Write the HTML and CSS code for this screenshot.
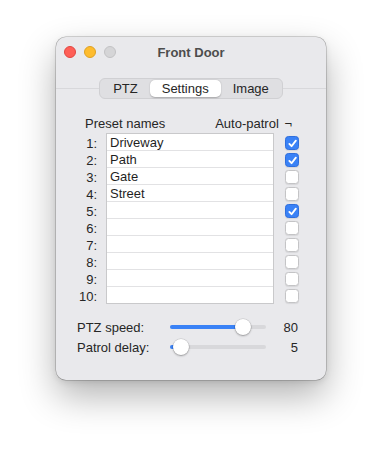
FILE: index.html
```html
<!DOCTYPE html>
<html lang="en">
<head>
    <meta charset="UTF-8">
    <meta name="viewport" content="width=device-width, initial-scale=1.0">
    <title>Front Door</title>
    <link rel="stylesheet" href="styles.css">
</head>
<body>
    <div class="window">
        <header class="titlebar">
            <div class="lights">
                <span class="light red"></span>
                <span class="light yellow"></span>
                <span class="light gray"></span>
            </div>
            <h1 class="title">Front Door</h1>
        </header>

        <nav class="tabs">
            <span class="tab">PTZ</span>
            <span class="tab selected">Settings</span>
            <span class="tab">Image</span>
        </nav>

        <main class="pane">
            <div class="presets-head">
                <span>Preset names</span>
                <span>Auto-patrol <span class="not">¬</span></span>
            </div>

            <div class="presets">
                <ol class="numbers">
                    <li>1:</li><li>2:</li><li>3:</li><li>4:</li><li>5:</li>
                    <li>6:</li><li>7:</li><li>8:</li><li>9:</li><li>10:</li>
                </ol>
                <ul class="names">
                    <li>Driveway</li>
                    <li>Path</li>
                    <li>Gate</li>
                    <li>Street</li>
                    <li></li><li></li><li></li><li></li><li></li><li></li>
                </ul>
                <ul class="checks">
                    <li><span class="check on"><svg viewBox="0 0 14 14"><path d="M3.6 7.4 L6 9.9 L10.6 3.9"/></svg></span></li>
                    <li><span class="check on"><svg viewBox="0 0 14 14"><path d="M3.6 7.4 L6 9.9 L10.6 3.9"/></svg></span></li>
                    <li><span class="check"></span></li>
                    <li><span class="check"></span></li>
                    <li><span class="check on"><svg viewBox="0 0 14 14"><path d="M3.6 7.4 L6 9.9 L10.6 3.9"/></svg></span></li>
                    <li><span class="check"></span></li>
                    <li><span class="check"></span></li>
                    <li><span class="check"></span></li>
                    <li><span class="check"></span></li>
                    <li><span class="check"></span></li>
                </ul>
            </div>

            <div class="sliders">
                <div class="slider-row">
                    <span class="slider-label">PTZ speed:</span>
                    <div class="slider">
                        <div class="fill" style="width: 73px"></div>
                        <span class="thumb" style="left: 73px"></span>
                    </div>
                    <span class="slider-value">80</span>
                </div>
                <div class="slider-row">
                    <span class="slider-label">Patrol delay:</span>
                    <div class="slider">
                        <div class="fill" style="width: 11px"></div>
                        <span class="thumb" style="left: 11px"></span>
                    </div>
                    <span class="slider-value">5</span>
                </div>
            </div>
        </main>
    </div>
</body>
</html>
```

FILE: styles.css
```css
body {
    margin: 0;
    min-height: 455px;
    background: #ffffff;
    font-family: "Liberation Sans", Arial, sans-serif;
    font-size: 13px;
    color: #262626;
}

ul, ol {
    list-style: none;
    margin: 0;
    padding: 0;
}

.window {
    margin: 37px 0 0 56px;
    width: 270px;
    height: 343px;
    box-sizing: border-box;
    background: #e9e9ec;
    border-radius: 10px;
    overflow: hidden;
    box-shadow: 0 0 0 0.5px rgba(0, 0, 0, 0.3), 0 16px 36px rgba(0, 0, 0, 0.3), 0 2px 6px rgba(0, 0, 0, 0.1);
    display: flex;
    flex-direction: column;
}

/* Barra de título */
.titlebar {
    height: 30px;
    display: flex;
    align-items: center;
}

.lights {
    display: flex;
    gap: 8px;
    padding-left: 8px;
}

.light {
    width: 12px;
    height: 12px;
    border-radius: 50%;
    box-sizing: border-box;
}

.red { background: #fe5f57; border: 0.5px solid #e14640; }
.yellow { background: #febc2e; border: 0.5px solid #dea123; }
.gray { background: #d5d5d7; border: 0.5px solid #c2c2c4; }

.title {
    margin: 0 0 0 -60px;
    flex: 1;
    text-align: center;
    font-size: 13px;
    font-weight: bold;
    color: #4d4d4d;
}

/* Abas */
.tabs {
    align-self: center;
    margin-top: 11px;
    display: flex;
    height: 21px;
    box-sizing: border-box;
    padding: 1px;
    background: #dfdfe2;
    border: 0.5px solid #d0d0d3;
    border-radius: 6px;
    position: relative;
    z-index: 1;
}

.tab {
    display: flex;
    align-items: center;
    justify-content: center;
    padding: 0 12px;
    border-radius: 5px;
    color: #262626;
}

.tab.selected {
    background: #ffffff;
    box-shadow: 0 0.5px 1.5px rgba(0, 0, 0, 0.25);
}

.pane {
    flex: 1;
    margin-top: -11px;
    padding-top: 27px;
    border-top: 1px solid #d8d8db;
}

.presets-head {
    display: flex;
    justify-content: space-between;
    line-height: 16px;
    margin-left: 29px;
    width: 207px;
    margin-bottom: 1px;
}

.not {
    margin-left: 2px;
}

.presets {
    display: flex;
    margin-left: 22px;
}

.numbers {
    width: 19px;
    text-align: right;
    padding-top: 1px;
    margin-right: 9px;
}

.numbers li {
    height: 17px;
    line-height: 19px;
}

.names {
    width: 168px;
    box-sizing: border-box;
    background: #ffffff;
    border: 1px solid #c9c9cb;
    border-bottom: none;
}

.names li {
    height: 17px;
    box-sizing: border-box;
    border-bottom: 1px solid #e2e2e4;
    padding-left: 3px;
    line-height: 18px;
    color: #1f1f1f;
}

.names li:last-child {
    border-bottom: 1px solid #c9c9cb;
}

.checks {
    margin-left: 11px;
    padding-top: 1px;
}

.checks li {
    height: 17px;
    display: flex;
    align-items: center;
}

.check {
    width: 14px;
    height: 14px;
    box-sizing: border-box;
    border-radius: 3.5px;
    background: #ffffff;
    border: 0.5px solid #c4c4c6;
    box-shadow: 0 0.5px 1px rgba(0, 0, 0, 0.08);
    display: block;
}

.check.on {
    background: #3a82f6;
    border-color: #2f6fde;
}

.check svg {
    display: block;
    width: 13px;
    height: 13px;
}

.check svg path {
    fill: none;
    stroke: #ffffff;
    stroke-width: 2;
    stroke-linecap: round;
    stroke-linejoin: round;
}

/* Controles deslizantes */
.sliders {
    margin-top: 13px;
    margin-left: 21px;
}

.slider-row {
    display: flex;
    align-items: center;
    height: 20px;
}

.slider-label {
    width: 93px;
}

.slider {
    position: relative;
    width: 96px;
    height: 4px;
    border-radius: 2px;
    background: #d8d8db;
}

.fill {
    height: 4px;
    border-radius: 2px;
    background: #3a82f6;
}

.thumb {
    position: absolute;
    top: 50%;
    width: 16px;
    height: 16px;
    border-radius: 50%;
    background: #ffffff;
    box-shadow: 0 0 0 0.5px rgba(0, 0, 0, 0.15), 0 1px 2px rgba(0, 0, 0, 0.3);
    transform: translate(-50%, -50%);
}

.slider-value {
    width: 32px;
    text-align: right;
}
```
